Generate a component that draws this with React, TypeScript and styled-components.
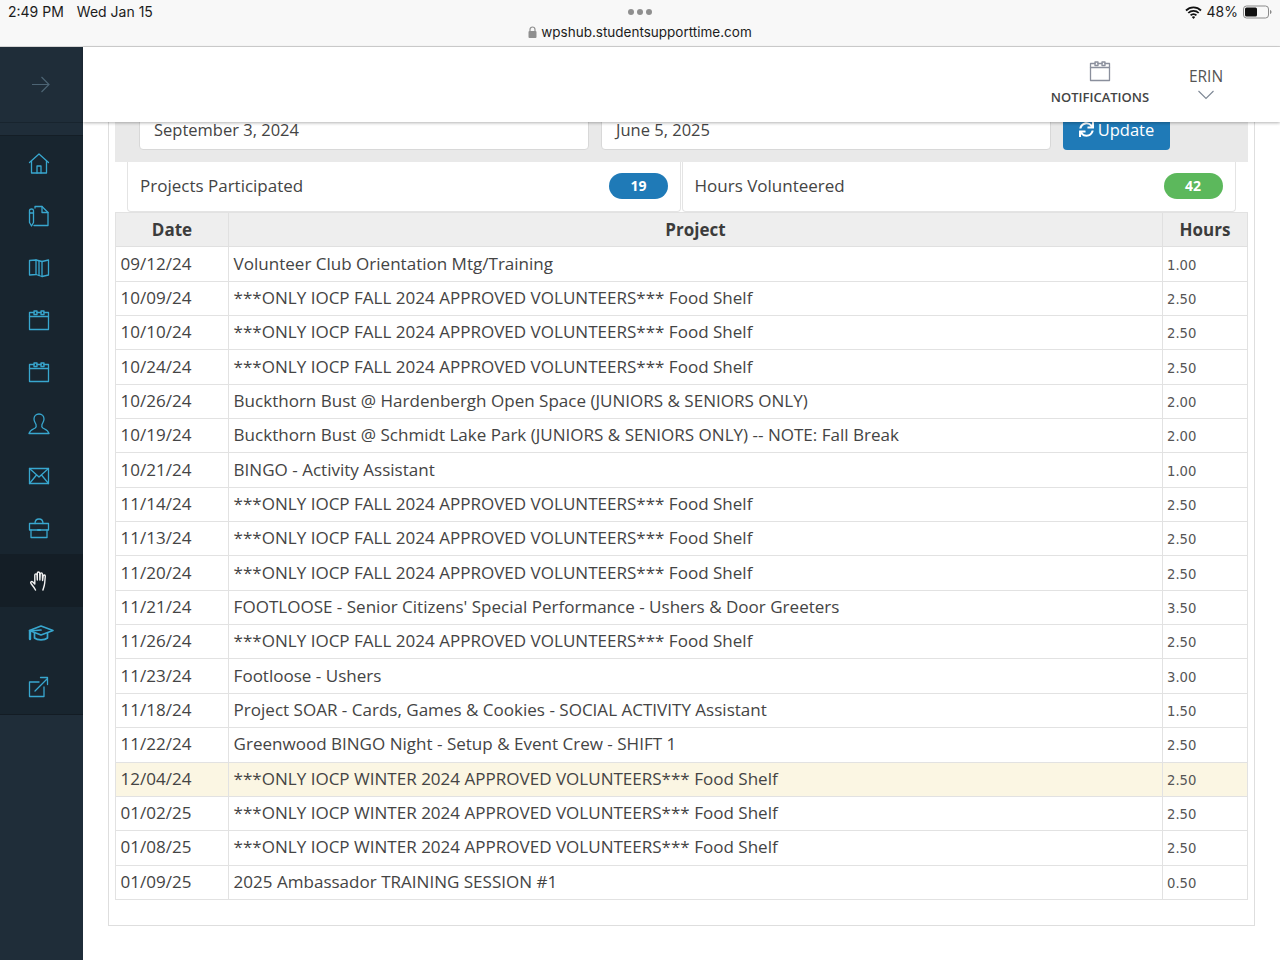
import React from "react";
import styled, { createGlobalStyle } from "styled-components";
import { FaSync } from "react-icons/fa";

const GlobalStyle = createGlobalStyle`
    html, body {
        margin: 0;
        padding: 0;
        background: #fff;
    }
    * {
        box-sizing: border-box;
    }
`;

const Page = styled.div`
    width: 1280px;
    height: 960px;
    display: flex;
    flex-direction: column;
    overflow: hidden;
    font-family: "Open Sans", sans-serif;
    color: #444;
`;

const StatusBar = styled.div`
    height: 47px;
    flex: none;
    display: grid;
    grid-template-columns: 1fr auto 1fr;
    padding: 4px 8px 0;
    background: #f8f8f8;
    border-bottom: 1px solid #d4d4d4;
    font-family: "Inter", "Liberation Sans", sans-serif;
    font-size: 14px;
    color: #1c1c1c;
`;

const StatusLeft = styled.div`
    display: flex;
    gap: 13px;
    line-height: 16px;
`;

const StatusCenter = styled.div`
    display: flex;
    flex-direction: column;
    align-items: center;
`;

const Dots = styled.div`
    display: flex;
    gap: 3px;
    height: 9px;
    margin-top: 3px;
    align-items: center;
`;

const Dot = styled.span`
    width: 6px;
    height: 6px;
    border-radius: 50%;
    background: #8f8f8f;
`;

const Url = styled.div`
    display: flex;
    align-items: center;
    gap: 4px;
    margin-top: 7px;
    line-height: 18px;
    font-size: 13.5px;
`;

const StatusRight = styled.div`
    display: flex;
    justify-content: flex-end;
    align-items: flex-start;
    gap: 5px;
    line-height: 16px;
`;

const Body = styled.div`
    flex: 1;
    display: flex;
    min-height: 0;
`;

const Sidebar = styled.aside`
    width: 83px;
    flex: none;
    display: flex;
    flex-direction: column;
    background: #1f2d39;
`;

const SidebarTop = styled.div`
    height: 76px;
    display: flex;
    align-items: center;
    padding-left: 31px;
    border-bottom: 1px solid #18242e;
`;

const SidebarGap = styled.div`
    height: 13px;
    border-bottom: 1px solid #141e26;
`;

const Nav = styled.nav`
    display: flex;
    flex-direction: column;
    padding-top: 2px;
    background: #18252f;
    border-bottom: 1px solid #131c24;
`;

const NavItem = styled.div<{ $active?: boolean; $last?: boolean }>`
    height: ${props => (props.$last ? "55px" : props.$active ? "53px" : "52px")};
    flex: none;
    display: flex;
    align-items: center;
    padding-left: ${props => (props.$active ? "28px" : "27px")};
    color: ${props => (props.$active ? "#f2f2f2" : "#38a7cf")};
    background: ${props => (props.$active ? "#141e26" : "transparent")};
`;

const Main = styled.main`
    flex: 1;
    min-width: 0;
    display: flex;
    flex-direction: column;
`;

const Header = styled.header`
    height: 75px;
    flex: none;
    position: relative;
    z-index: 2;
    display: flex;
    justify-content: flex-end;
    background: #fff;
    box-shadow: 0 1px 3px rgba(0, 0, 0, 0.3);
`;

const Notifications = styled.div`
    width: 100px;
    display: flex;
    flex-direction: column;
    align-items: center;
    padding-top: 12px;
    color: #8a8f9c;
`;

const NotificationsLabel = styled.span`
    margin-top: 5px;
    font-size: 13px;
    font-weight: 600;
    line-height: 18px;
    color: #444;
    white-space: nowrap;
`;

const UserMenu = styled.div`
    width: 34px;
    margin: 0 57px 0 39px;
    display: flex;
    flex-direction: column;
    align-items: center;
    padding-top: 19px;
    color: #555;
    font-size: 15.5px;
    line-height: 21px;
`;

const Content = styled.div`
    flex: 1;
    min-height: 0;
    overflow: hidden;
    padding: 0 25px;
`;

const Card = styled.section`
    margin-top: -12px;
    padding: 0 6px 25px;
    border: 1px solid #dedede;
    border-top: 0;
`;

const FilterPanel = styled.div`
    height: 52px;
    display: flex;
    padding-left: 24px;
    background: #e9e9e9;
`;

const DateField = styled.div`
    width: 450px;
    height: 40px;
    margin-right: 12px;
    padding: 0 14px 2px;
    display: flex;
    align-items: center;
    background: #fff;
    border: 1px solid #d8d8d8;
    border-radius: 4px;
    font-size: 16.5px;
`;

const UpdateButton = styled.button`
    width: 107px;
    height: 40px;
    display: flex;
    align-items: center;
    justify-content: center;
    gap: 4px;
    padding: 0 0 2px;
    border: 0;
    border-radius: 4px;
    background: #1f7ab7;
    color: #fff;
    font-family: inherit;
    font-size: 16.5px;
`;

const StatRow = styled.div`
    display: grid;
    grid-template-columns: 554px 554px;
    gap: 0.5px;
    padding-left: 12px;
`;

const StatCard = styled.div`
    height: 50px;
    display: flex;
    align-items: center;
    justify-content: space-between;
    padding: 0 12px 3px 12px;
    background: #fff;
    border: 1px solid #e4e4e4;
    border-top: 0;
    border-radius: 0 0 4px 4px;
    font-size: 17px;
`;

const Badge = styled.span<{ $color: string }>`
    width: 59px;
    height: 26px;
    margin-top: 2px;
    border-radius: 13px;
    background: ${props => props.$color};
    color: #fff;
    font-size: 14px;
    font-weight: 700;
    line-height: 26px;
    text-align: center;
`;

const Table = styled.div`
    display: grid;
    grid-template-columns: 113px 934px 85px;
    grid-auto-rows: 34.35px;
    border-top: 1px solid #e2e2e2;
    border-left: 1px solid #e2e2e2;
`;

const HeadCell = styled.div`
    display: flex;
    align-items: center;
    justify-content: center;
    padding-bottom: 1px;
    background: #eeeeee;
    border-right: 1px solid #e0e0e0;
    border-bottom: 1px solid #e0e0e0;
    font-size: 17px;
    font-weight: 700;
    color: #3c3c3c;
`;

const Cell = styled.div<{ $highlight?: boolean; $small?: boolean }>`
    display: flex;
    align-items: center;
    padding: ${props => (props.$small ? "2px 0 0 4px" : "0 0 2px 4.6px")};
    white-space: nowrap;
    background: ${props => (props.$highlight ? "#fbf6e3" : "#fff")};
    border-right: 1px solid #e2e2e2;
    border-bottom: 1px solid #e2e2e2;
    font-family: ${props => (props.$small ? '"DejaVu Sans", sans-serif' : "inherit")};
    font-size: ${props => (props.$small ? "13.2px" : "17.05px")};
    color: ${props => (props.$small ? "#555" : "#444")};
`;

const FOOD_FALL = "***ONLY IOCP FALL 2024 APPROVED VOLUNTEERS*** Food Shelf";
const FOOD_WINTER = "***ONLY IOCP WINTER 2024 APPROVED VOLUNTEERS*** Food Shelf";

const rows = [
    { date: "09/12/24", project: "Volunteer Club Orientation Mtg/Training", hours: "1.00" },
    { date: "10/09/24", project: FOOD_FALL, hours: "2.50" },
    { date: "10/10/24", project: FOOD_FALL, hours: "2.50" },
    { date: "10/24/24", project: FOOD_FALL, hours: "2.50" },
    { date: "10/26/24", project: "Buckthorn Bust @ Hardenbergh Open Space (JUNIORS & SENIORS ONLY)", hours: "2.00" },
    { date: "10/19/24", project: "Buckthorn Bust @ Schmidt Lake Park (JUNIORS & SENIORS ONLY) -- NOTE: Fall Break", hours: "2.00" },
    { date: "10/21/24", project: "BINGO - Activity Assistant", hours: "1.00" },
    { date: "11/14/24", project: FOOD_FALL, hours: "2.50" },
    { date: "11/13/24", project: FOOD_FALL, hours: "2.50" },
    { date: "11/20/24", project: FOOD_FALL, hours: "2.50" },
    { date: "11/21/24", project: "FOOTLOOSE - Senior Citizens' Special Performance - Ushers & Door Greeters", hours: "3.50" },
    { date: "11/26/24", project: FOOD_FALL, hours: "2.50" },
    { date: "11/23/24", project: "Footloose - Ushers", hours: "3.00" },
    { date: "11/18/24", project: "Project SOAR - Cards, Games & Cookies - SOCIAL ACTIVITY Assistant", hours: "1.50" },
    { date: "11/22/24", project: "Greenwood BINGO Night - Setup & Event Crew - SHIFT 1", hours: "2.50" },
    { date: "12/04/24", project: FOOD_WINTER, hours: "2.50", highlight: true },
    { date: "01/02/25", project: FOOD_WINTER, hours: "2.50" },
    { date: "01/08/25", project: FOOD_WINTER, hours: "2.50" },
    { date: "01/09/25", project: "2025 Ambassador TRAINING SESSION #1", hours: "0.50" },
];

const LineIcon = ({ children, size = 24, stroke = 1.3 }: { children: React.ReactNode; size?: number; stroke?: number }) => (
    <svg width={size} height={size} viewBox="0 0 24 24" fill="none" stroke="currentColor" strokeWidth={stroke} strokeLinejoin="round" strokeLinecap="round">
        {children}
    </svg>
);

const CalendarIcon = () => (
    <LineIcon>
        <path d="M7 4.500H2.500v17h19v-17H17" />
        <path d="M2.500 8.500h19M10 4.500h4" />
        <rect x="7" y="3" width="3" height="3.500" />
        <rect x="14" y="3" width="3" height="3.500" />
    </LineIcon>
);

const navIcons = [
    <LineIcon>
        <path d="M2.500 10.500 12 2l9.500 8.500" />
        <path d="M4.500 9v12h15V9" />
        <path d="M10 21v-7h4v7" />
    </LineIcon>,
    <LineIcon>
        <path d="M8 4V2.500h7l6 6v13H7" />
        <path d="M15 2.500v6h6" />
        <path d="M2.500 6.500c0-2 4-2 4 0v12l-2 3.500-2-3.500z" />
        <path d="M2.500 9h4" />
    </LineIcon>,
    <LineIcon>
        <path d="M2.500 4.500 9 4v14.500l-6.500.5z" />
        <path d="M9 4l6 1.500 6.500-1.500v15l-6.500 1.500L9 18.500" />
        <path d="M15 5.500v15M12 5v14.500" />
    </LineIcon>,
    <CalendarIcon />,
    <CalendarIcon />,
    <LineIcon>
        <path d="M12 2c-3 0-5 2.200-5 5 0 2.500 1.500 4 2 5.500.4 1.300.2 2.800-.8 3.500-1.700 1.100-5.200 1.800-6.200 5.500h20c-1-3.700-4.500-4.400-6.200-5.500-1-.7-1.200-2.200-.8-3.500.5-1.500 2-3 2-5.500 0-2.800-2-5-5-5z" />
    </LineIcon>,
    <LineIcon>
        <rect x="2.500" y="4.500" width="19" height="15" />
        <path d="M2.500 4.500 12 13l9.500-8.500M2.500 19.500 9.500 11M21.500 19.500 14.500 11" />
    </LineIcon>,
    <LineIcon>
        <path d="M2.500 7.500h19v6.500h-19z" />
        <path d="M4 14v7.500h16V14" />
        <path d="M8 7.500C8 5 9 3 12 3s4 2 4 4.500" />
        <path d="M11 14h2" strokeWidth={2} />
    </LineIcon>,
    <LineIcon stroke={1.4}>
        <path d="M7.500 21c-1-2-2.500-4-4.500-6.500-1-1.300.6-2.600 1.800-1.500l2 2V6c0-1.500 2-1.500 2.200 0l.3 5V4.200c0-1.600 2.200-1.600 2.400 0l.2 6.800.3-6c.1-1.500 2.200-1.400 2.200 0l.2 6.500.6-4.500c.2-1.400 2.200-1.200 2.100.2l-.6 6.800c-.2 2.500-1 4.500-1.800 7" />
    </LineIcon>,
    <svg width="28" height="24" viewBox="0 0 28 24" fill="none" stroke="currentColor" strokeWidth="1.700" strokeLinejoin="round" strokeLinecap="round">
        <path d="M14 5 26 9.500 14 14 2.500 9.500z" />
        <path d="M7.500 12v5c3 2.500 10 2.500 13 0v-5" />
        <path d="M3 10v8" strokeWidth="2.400" />
        <path d="M3 10l11-1" />
    </svg>,
    <LineIcon>
        <path d="M12 7H2.500v14.500H17V12" />
        <path d="M8 16 20 4M13.500 2.500h7v7" />
    </LineIcon>,
];

const App = () => {
    return (
        <Page>
            <GlobalStyle />
            <StatusBar>
                <StatusLeft>
                    <span>2:49 PM</span>
                    <span>Wed Jan 15</span>
                </StatusLeft>
                <StatusCenter>
                    <Dots>
                        <Dot />
                        <Dot />
                        <Dot />
                    </Dots>
                    <Url>
                        <svg width="9" height="12" viewBox="0 0 9 12">
                            <path d="M2 5V3.500a2.500 2.500 0 0 1 5 0V5" fill="none" stroke="#8f8f8f" strokeWidth="1.200" />
                            <rect x="0.500" y="5" width="8" height="7" rx="1" fill="#8f8f8f" />
                        </svg>
                        <span>wpshub.studentsupporttime.com</span>
                    </Url>
                </StatusCenter>
                <StatusRight>
                    <svg width="17" height="13" viewBox="0 0 17 13" style={{ marginTop: 2 }}>
                        <path d="M1 4.500a10.500 10.500 0 0 1 15 0M3.300 7a7.200 7.200 0 0 1 10.400 0M5.600 9.400a4 4 0 0 1 5.800 0" fill="none" stroke="#111" strokeWidth="1.800" />
                        <path d="M8.500 13 6.800 11a2.400 2.400 0 0 1 3.400 0z" fill="#111" />
                    </svg>
                    <span>48%</span>
                    <svg width="29" height="14" viewBox="0 0 29 14" style={{ marginTop: 1 }}>
                        <rect x="0.500" y="1" width="25" height="12" rx="3" fill="none" stroke="#8a8a8a" />
                        <rect x="2" y="2.500" width="12" height="9" rx="1.500" fill="#111" />
                        <path d="M27 5v4c1-.3 1.500-1 1.500-2s-.5-1.700-1.500-2z" fill="#8a8a8a" />
                    </svg>
                </StatusRight>
            </StatusBar>
            <Body>
                <Sidebar>
                    <SidebarTop>
                        <svg width="19" height="19" viewBox="0 0 19 19" fill="none" stroke="#4d6474" strokeWidth="1.200">
                            <path d="M1 9.500h17M10.500 2l7.500 7.500-7.500 7.500" />
                        </svg>
                    </SidebarTop>
                    <SidebarGap />
                    <Nav>
                        {navIcons.map((icon, i) => (
                            <NavItem key={i} $active={i === 8} $last={i === navIcons.length - 1}>
                                {icon}
                            </NavItem>
                        ))}
                    </Nav>
                </Sidebar>
                <Main>
                    <Header>
                        <Notifications>
                            <CalendarIcon />
                            <NotificationsLabel>NOTIFICATIONS</NotificationsLabel>
                        </Notifications>
                        <UserMenu>
                            <span>ERIN</span>
                            <svg width="16" height="10" viewBox="0 0 16 10" fill="none" stroke="#7d8794" strokeWidth="1.100" style={{ marginTop: 3 }}>
                                <path d="M.5 1 8 8.500 15.500 1" />
                            </svg>
                        </UserMenu>
                    </Header>
                    <Content>
                        <Card>
                            <FilterPanel>
                                <DateField>September 3, 2024</DateField>
                                <DateField>June 5, 2025</DateField>
                                <UpdateButton>
                                    <FaSync size={15} />
                                    Update
                                </UpdateButton>
                            </FilterPanel>
                            <StatRow>
                                <StatCard>
                                    <span>Projects Participated</span>
                                    <Badge $color="#1f7ab7">19</Badge>
                                </StatCard>
                                <StatCard>
                                    <span>Hours Volunteered</span>
                                    <Badge $color="#5cb85c">42</Badge>
                                </StatCard>
                            </StatRow>
                            <Table>
                                <HeadCell>Date</HeadCell>
                                <HeadCell>Project</HeadCell>
                                <HeadCell>Hours</HeadCell>
                                {rows.map(row => (
                                    <React.Fragment key={row.date}>
                                        <Cell $highlight={row.highlight}>{row.date}</Cell>
                                        <Cell $highlight={row.highlight}>{row.project}</Cell>
                                        <Cell $highlight={row.highlight} $small>{row.hours}</Cell>
                                    </React.Fragment>
                                ))}
                            </Table>
                        </Card>
                    </Content>
                </Main>
            </Body>
        </Page>
    );
};

export default App;
